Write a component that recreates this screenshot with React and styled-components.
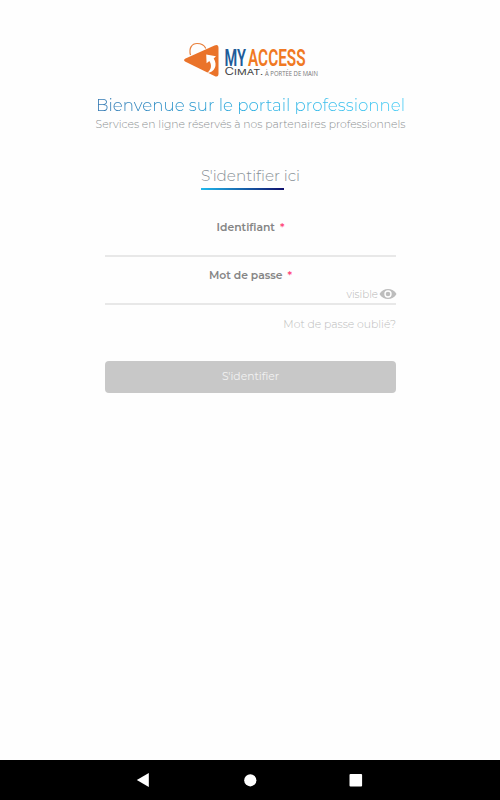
import React from 'react'
import styled, { createGlobalStyle } from 'styled-components'

const fields = [
  { id: 'login', label: 'Identifiant', type: 'text' },
  { id: 'password', label: 'Mot de passe', type: 'password' },
]

const Logo = () => (
  <LogoSvg viewBox="0 0 136 37" role="img" aria-label="My Access Cimat">
    <path d="M7.5 13C5.6 6 9 1.5 14 1.5C18.5 1.5 21.5 3.5 22.8 6.5" fill="none" stroke="#e9803c" strokeWidth="1.2" />
    <path d="M2.5 16.5L31.5 3.5Q35.5 2 35.5 6V31.5Q35.5 35.8 31.5 34L2.5 19.8Q-.4 18.2 2.5 16.5Z" fill="#ea732a" />
    <path d="M24 31C31.5 30.5 35 23 30.7 16.4L33 14.3L23.2 12.6L23.6 21.3L26.3 19C29 23 28.6 27.5 24 31Z" fill="#fff" />
    <LogoTitle x="41.5" y="23.5" textLength="21.5" lengthAdjust="spacingAndGlyphs" fill="#205b99">MY</LogoTitle>
    <LogoTitle x="65" y="23.5" textLength="57.5" lengthAdjust="spacingAndGlyphs" fill="#f07923">ACCESS</LogoTitle>
    <LogoBrand x="41.5" y="33" textLength="38.5" lengthAdjust="spacingAndGlyphs">
      <tspan fontSize="10">C</tspan>IMAT.
    </LogoBrand>
    <LogoNote x="82" y="33.6" textLength="53" lengthAdjust="spacingAndGlyphs">À PORTÉE DE MAIN</LogoNote>
  </LogoSvg>
)

const EyeIcon = () => (
  <svg width="18" height="12" viewBox="0 0 18 12">
    <path d="M.5 6C4-.7 14-.7 17.5 6C14 12.7 4 12.7.5 6Z" fill="#bdbdbd" />
    <circle cx="9" cy="6" r="3" fill="none" stroke="#fff" strokeWidth="1.4" />
  </svg>
)

const App = () => {
  return (
    <Page>
      <GlobalStyle />
      <Main>
        <Logo />
        <Title>Bienvenue sur le portail professionnel</Title>
        <Subtitle>Services en ligne réservés à nos partenaires professionnels</Subtitle>
        <FormTitle>S'identifier ici</FormTitle>
        <Form>
          {fields.map((field) => (
            <Field key={field.id}>
              <Label htmlFor={field.id}>
                {field.label}<Required>*</Required>
              </Label>
              <InputRow>
                <Input id={field.id} type={field.type} />
                {field.type === 'password' && (
                  <Visibility type="button">visible<EyeIcon /></Visibility>
                )}
              </InputRow>
            </Field>
          ))}
          <Forgot href="#">Mot de passe oublié?</Forgot>
          <Submit type="button" disabled>S'identifier</Submit>
        </Form>
      </Main>
      <SystemBar>
        <svg width="14" height="16" viewBox="0 0 14 16"><path d="M.8 8L12.8 1V15Z" fill="#fff" /></svg>
        <svg width="14" height="16" viewBox="0 0 14 16"><circle cx="7.3" cy="8.3" r="6.1" fill="#fff" /></svg>
        <svg width="14" height="16" viewBox="0 0 14 16"><rect x=".5" y="1.9" width="12.6" height="12.6" rx="1" fill="#fff" /></svg>
      </SystemBar>
    </Page>
  )
}

const GlobalStyle = createGlobalStyle`
    * {
        box-sizing: border-box;
    }

    body {
        margin: 0;
        background: #fff;
        font-family: Montserrat, Inter, sans-serif;
    }
`;

const Page = styled.div`
    display: flex;
    flex-direction: column;
    height: 800px;
    background: #fefefe;
`;

const Main = styled.main`
    display: flex;
    flex: 1;
    flex-direction: column;
    align-items: center;
    padding: 42px 0 0 1px;
    white-space: nowrap;
`;

const LogoSvg = styled.svg`
    width: 136px;
    height: 37px;
    margin-left: 1px;
    overflow: visible;
`;

const LogoTitle = styled.text`
    font: 600 23.5px Roboto, sans-serif;
`;

const LogoBrand = styled.text`
    font-family: Inter, sans-serif;
    font-size: 8.2px;
    fill: #444;
`;

const LogoNote = styled.text`
    font: 400 6.8px "Open Sans", sans-serif;
    fill: #777;
`;

const Title = styled.h1`
    margin: 15px 0 0;
    font-size: 16.65px;
    font-weight: 300;
    line-height: 22px;
    color: transparent;
    background: linear-gradient(90deg, #2f75b0, #24ace0 50%, #42cbf5);
    background-clip: text;
`;

const Subtitle = styled.p`
    margin: 1px 0 0;
    font-size: 10.8px;
    font-weight: 300;
    line-height: 15px;
    color: #8c9092;
`;

const FormTitle = styled.h2`
    margin: 33px 0 0;
    padding-bottom: 4px;
    font-size: 15.2px;
    font-weight: 300;
    line-height: 21px;
    color: #899197;
    background: linear-gradient(90deg, #20b9ed, #10106d) left bottom / 83px 2px no-repeat;
`;

const Form = styled.form`
    display: flex;
    flex-direction: column;
    width: 291px;
    margin-top: 30px;
`;

const Field = styled.div`
    display: flex;
    flex-direction: column;
    height: 48px;
`;

const Label = styled.label`
    font-size: 10.8px;
    font-weight: 600;
    line-height: 15px;
    text-align: center;
    color: #858585;
`;

const Required = styled.span`
    margin-left: 5px;
    color: #ff4d80;
`;

const InputRow = styled.div`
    display: flex;
    align-items: center;
    height: 22px;
    border-bottom: 2px solid #e8e8e8;
`;

const Input = styled.input`
    flex: 1;
    min-width: 0;
    padding: 0;
    border: none;
    outline: none;
    background: transparent;
`;

const Visibility = styled.button`
    display: flex;
    align-items: center;
    gap: 1px;
    margin-right: -1px;
    padding: 2px 0 0;
    border: none;
    background: transparent;
    font: 300 10.3px Montserrat, Inter, sans-serif;
    color: #b5b5b5;
`;

const Forgot = styled.a`
    align-self: flex-end;
    margin-top: 1px;
    font-size: 10.8px;
    font-weight: 300;
    line-height: 15px;
    text-decoration: none;
    color: #bcbcbc;
`;

const Submit = styled.button`
    height: 32px;
    margin-top: 29px;
    padding: 0 0 2px;
    border: none;
    border-radius: 4px;
    background: #c8c8c8;
    font: 400 10.8px Montserrat, Inter, sans-serif;
    color: #f2f2f2;
`;

const SystemBar = styled.footer`
    display: flex;
    justify-content: space-between;
    align-items: center;
    height: 40px;
    padding: 0 137px 0 136px;
    background: #000;
`;

export default App
